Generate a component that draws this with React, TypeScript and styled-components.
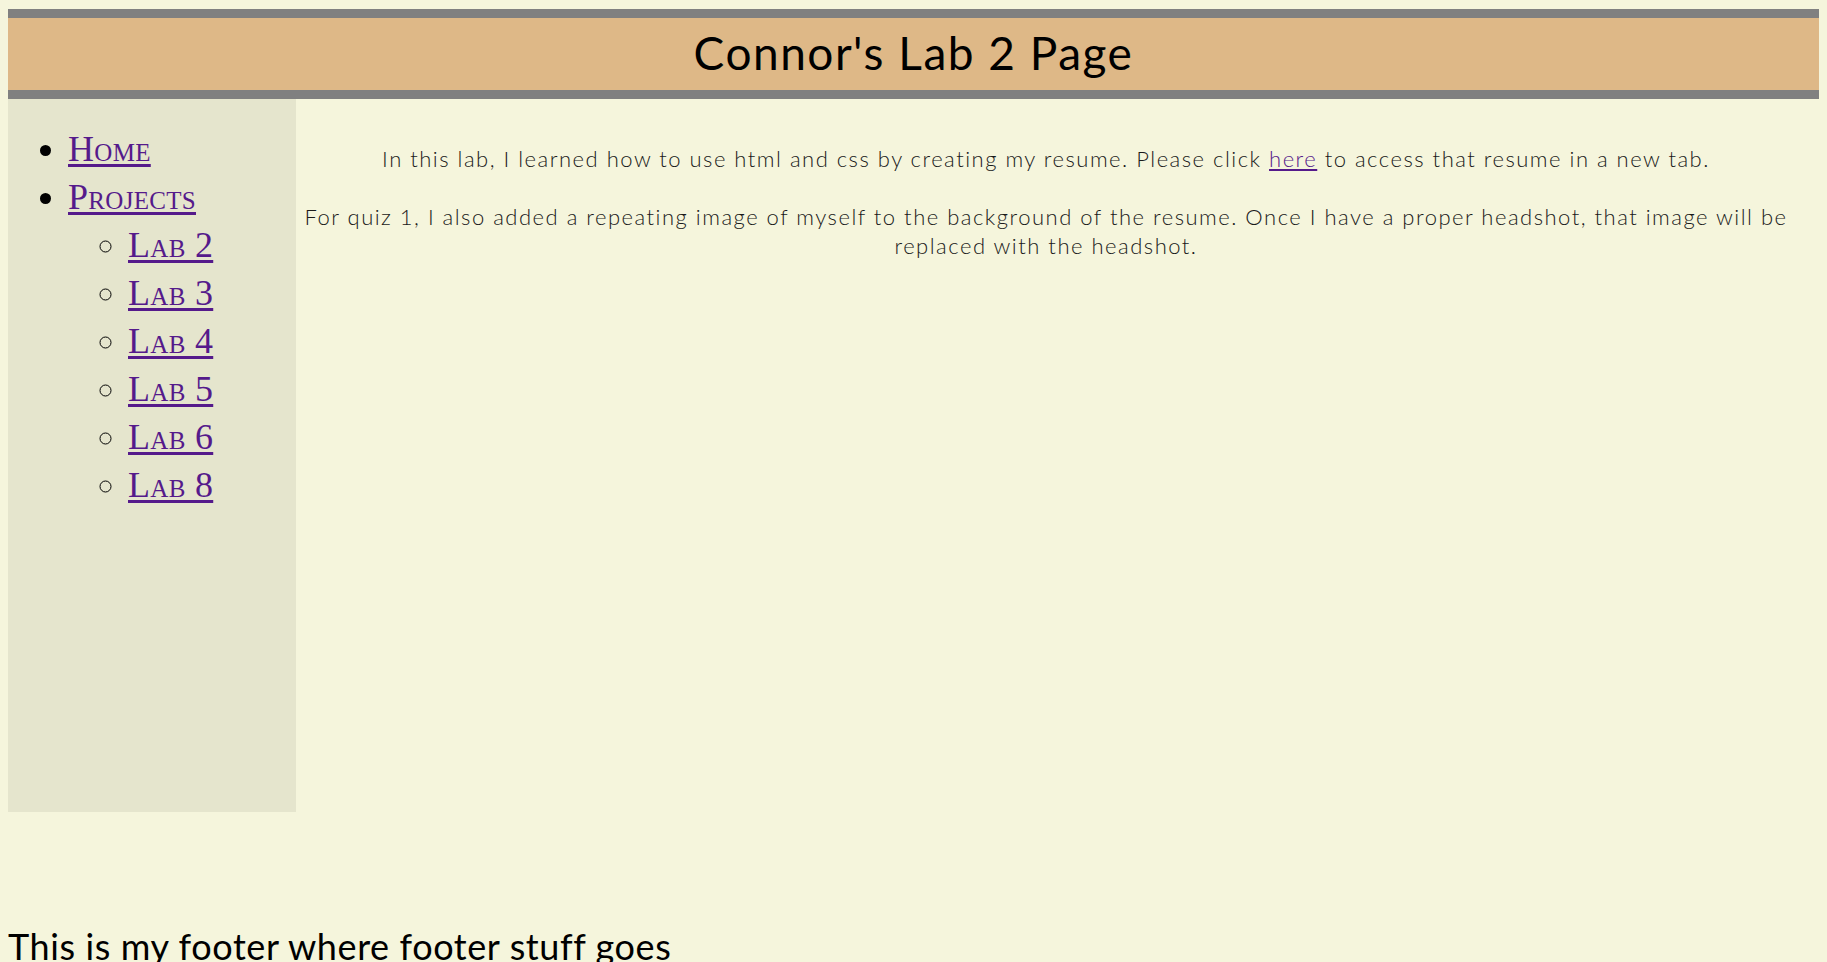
import React from "react";
import styled, { createGlobalStyle } from "styled-components";

const GlobalStyle = createGlobalStyle`
  html, body {
    margin: 0;
    padding: 0;
  }
  body {
    background: #f5f5dc;
    margin: 8px;
    overflow: hidden;
    font-family: "Lato", "Liberation Sans", sans-serif;
    color: #000;
  }
`;

const Page = styled.div`
  display: flex;
  flex-direction: column;
`;

const Header = styled.header`
  margin-top: 1px;
  background: #deb887;
  border-top: 9px solid #808080;
  border-bottom: 9px solid #808080;
  padding: 7px 0 10px;
`;

const Title = styled.h1`
  margin: 0;
  text-align: center;
  font-family: "Lato", "Open Sans", sans-serif;
  font-weight: 400;
  font-size: 46px;
  line-height: 55px;
  letter-spacing: 1.5px;
  color: #000;
`;

const Body = styled.div`
  display: flex;
  align-items: flex-start;
`;

const Sidebar = styled.nav`
  width: 288px;
  height: 713px;
  flex-shrink: 0;
  box-sizing: border-box;
  background: #e5e5cd;
  padding-top: 26px;
`;

const NavList = styled.ul<{ $nested?: boolean }>`
  margin: 0;
  padding-left: 60px;
  list-style-type: ${(p) => (p.$nested ? "circle" : "disc")};
`;

const NavItem = styled.li`
  font-family: "Liberation Serif", "Times New Roman", serif;
  font-size: 36px;
  line-height: 48px;
  font-variant: small-caps;
  letter-spacing: 0.3px;
`;

const NavLink = styled.a`
  color: #551a8b;
  text-decoration: underline;
  text-decoration-thickness: 3px;
  text-underline-offset: 3px;
`;

const Main = styled.main`
  flex: 1;
  padding: 45px 26px 0 3px;
  text-align: center;
`;

const Para = styled.p`
  margin: 0 0 29px;
  font-family: "Lato", sans-serif;
  font-weight: 300;
  font-size: 22px;
  line-height: 29px;
  letter-spacing: 1.5px;
  color: #1a1a1a;
`;

const InlineLink = styled.a`
  color: #551a8b;
  text-decoration: underline;
`;

const Footer = styled.footer`
  margin-top: 113px;
  font-family: "Lato", sans-serif;
  font-weight: 400;
  font-size: 36px;
  line-height: 43px;
  letter-spacing: 0.6px;
  color: #000;
`;

const labs = ["Lab 2", "Lab 3", "Lab 4", "Lab 5", "Lab 6", "Lab 8"];

export default function App() {
  return (
    <>
      <GlobalStyle />
      <Page>
        <Header>
          <Title>Connor's Lab 2 Page</Title>
        </Header>
        <Body>
          <Sidebar>
            <NavList>
              <NavItem>
                <NavLink href="#">Home</NavLink>
              </NavItem>
              <NavItem>
                <NavLink href="#">Projects</NavLink>
                <NavList $nested>
                  {labs.map((l) => (
                    <NavItem key={l}>
                      <NavLink href="#">{l}</NavLink>
                    </NavItem>
                  ))}
                </NavList>
              </NavItem>
            </NavList>
          </Sidebar>
          <Main>
            <Para>
              In this lab, I learned how to use html and css by creating my resume. Please click{" "}
              <InlineLink href="#">here</InlineLink> to access that resume in a new tab.
            </Para>
            <Para>
              For quiz 1, I also added a repeating image of myself to the background of the resume. Once I have a
              proper headshot, that image will be replaced with the headshot.
            </Para>
          </Main>
        </Body>
        <Footer>This is my footer where footer stuff goes</Footer>
      </Page>
    </>
  );
}
